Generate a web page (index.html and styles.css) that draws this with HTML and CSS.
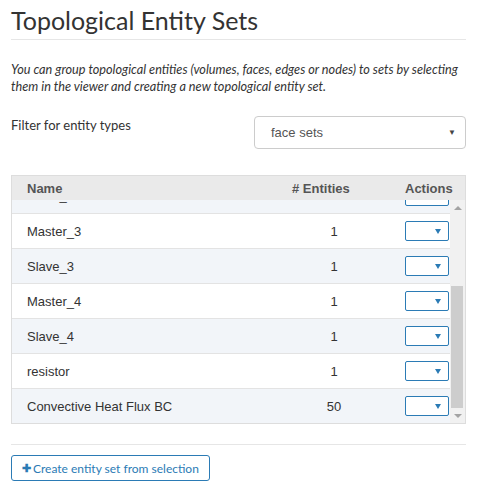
FILE: index.html
```html
<!DOCTYPE html>
<html>
<head>
<meta charset="utf-8">
<link rel="stylesheet" href="styles.css">
</head>
<body>
<div class="page">
  <h1 class="title">Topological Entity Sets</h1>
  <p class="intro">You can group topological entities (volumes, faces, edges or nodes) to sets by selecting them in the viewer and creating a new topological entity set.</p>
  <div class="filter">
    <label class="filter-label">Filter for entity types</label>
    <div class="select-box"><span>face sets</span><span class="select-caret">&#9660;</span></div>
  </div>
  <div class="table">
    <div class="thead">
      <div class="th th-name">Name</div>
      <div class="th th-count"># Entities</div>
      <div class="th th-actions">Actions</div>
    </div>
    <div class="tbody">
      <div class="viewport">
        <div class="rows">
          <div class="row striped"><div class="td">Slave_2</div><div class="td count">1</div><div class="td act"><span class="mini-select"><span class="mini-caret"></span></span></div></div>
          <div class="row"><div class="td">Master_3</div><div class="td count">1</div><div class="td act"><span class="mini-select"><span class="mini-caret"></span></span></div></div>
          <div class="row striped"><div class="td">Slave_3</div><div class="td count">1</div><div class="td act"><span class="mini-select"><span class="mini-caret"></span></span></div></div>
          <div class="row"><div class="td">Master_4</div><div class="td count">1</div><div class="td act"><span class="mini-select"><span class="mini-caret"></span></span></div></div>
          <div class="row striped"><div class="td">Slave_4</div><div class="td count">1</div><div class="td act"><span class="mini-select"><span class="mini-caret"></span></span></div></div>
          <div class="row"><div class="td">resistor</div><div class="td count">1</div><div class="td act"><span class="mini-select"><span class="mini-caret"></span></span></div></div>
          <div class="row striped"><div class="td">Convective Heat Flux BC</div><div class="td count">50</div><div class="td act"><span class="mini-select"><span class="mini-caret"></span></span></div></div>
        </div>
      </div>
      <div class="scrollbar">
        <div class="sb-btn"><span class="sb-up"></span></div>
        <div class="sb-track"><div class="sb-thumb"></div></div>
        <div class="sb-btn"><span class="sb-down"></span></div>
      </div>
    </div>
  </div>
  <hr class="rule">
  <button class="create-btn"><span class="plus">&#10010;</span>Create entity set from selection</button>
</div>
</body>
</html>
```
FILE: styles.css
```css
html, body {
  margin: 0;
  padding: 0;
  background: #fff;
}
.page {
  padding: 0 11px;
  font-family: Lato, "Liberation Sans", sans-serif;
  color: #333;
}
.title {
  margin: 0;
  padding-top: 5px;
  font-size: 25px;
  font-weight: 400;
  line-height: 30px;
  color: #333;
  padding-bottom: 4px;
  border-bottom: 1px solid #e6e6e6;
}
.intro {
  margin: 21px 0 0;
  font-size: 12.7px;
  font-style: italic;
  line-height: 17px;
}
.filter {
  display: flex;
  justify-content: space-between;
  align-items: flex-start;
  margin-top: 21px;
}
.filter-label {
  font-size: 13px;
  line-height: 18px;
}
.select-box {
  box-sizing: border-box;
  width: 212px;
  height: 33px;
  border: 1px solid #ccc;
  border-radius: 4px;
  display: flex;
  align-items: center;
  justify-content: space-between;
  padding: 0 9px 0 16px;
  font-family: "Liberation Sans", Arial, sans-serif;
  font-size: 13px;
  color: #555;
}
.select-caret {
  font-size: 8px;
  color: #444;
}
.table {
  margin-top: 26px;
  border: 1px solid #ddd;
  font-family: "Liberation Sans", Arial, sans-serif;
  font-size: 13px;
}
.thead {
  display: grid;
  grid-template-columns: 280px 113px 1fr;
  height: 24px;
  background: #eaeaea;
  align-items: center;
}
.th {
  font-weight: 700;
  color: #555;
}
.th-name { padding-left: 15px; }
.tbody {
  display: flex;
  height: 223px;
}
.viewport {
  flex: 1;
  overflow: hidden;
}
.rows {
  margin-top: -22px;
}
.row {
  display: grid;
  grid-template-columns: 280px 84px 1fr;
  height: 34px;
  border-top: 1px solid #e3e3e3;
  align-items: center;
  color: #333;
}
.row:first-child { border-top: none; height: 35px; }
.row.striped { background: #f2f5f9; }
.td:first-child { padding-left: 15px; }
.count { text-align: center; }
.act { padding-left: 29px; display: flex; }
.mini-select {
  width: 42px;
  height: 18px;
  border: 1px solid #2b7bb5;
  border-radius: 2px;
  background: #fff;
  position: relative;
  display: block;
}
.mini-caret {
  position: absolute;
  right: 7px;
  top: 7px;
  width: 0;
  height: 0;
  border-left: 3.5px solid transparent;
  border-right: 3.5px solid transparent;
  border-top: 5px solid #2b7bb5;
}
.scrollbar {
  width: 15px;
  background: #f1f1f1;
  display: flex;
  flex-direction: column;
}
.sb-btn {
  height: 15px;
  display: flex;
  align-items: center;
  justify-content: center;
}
.sb-up {
  width: 0; height: 0;
  border-left: 4px solid transparent;
  border-right: 4px solid transparent;
  border-bottom: 4px solid #a3a3a3;
}
.sb-down {
  width: 0; height: 0;
  border-left: 4px solid transparent;
  border-right: 4px solid transparent;
  border-top: 4px solid #a3a3a3;
}
.sb-track {
  flex: 1;
  display: flex;
  flex-direction: column;
  justify-content: flex-end;
  padding: 0 2px 0 1px;
}
.sb-thumb {
  height: 122px;
  background: #cdcdcd;
}
.rule {
  margin: 20px 0 0;
  border: none;
  border-top: 1px solid #e6e6e6;
  height: 0;
}
.create-btn {
  margin-top: 10px;
  height: 26px;
  padding: 0 10px 0 10px;
  border: 1px solid #2b7bb5;
  border-radius: 3px;
  background: #fff;
  color: #2b7bb5;
  font-family: Lato, "Liberation Sans", sans-serif;
  font-size: 12px;
  display: flex;
  align-items: center;
  gap: 2px;
}
.plus {
  font-size: 11px;
  font-weight: 700;
}
```
